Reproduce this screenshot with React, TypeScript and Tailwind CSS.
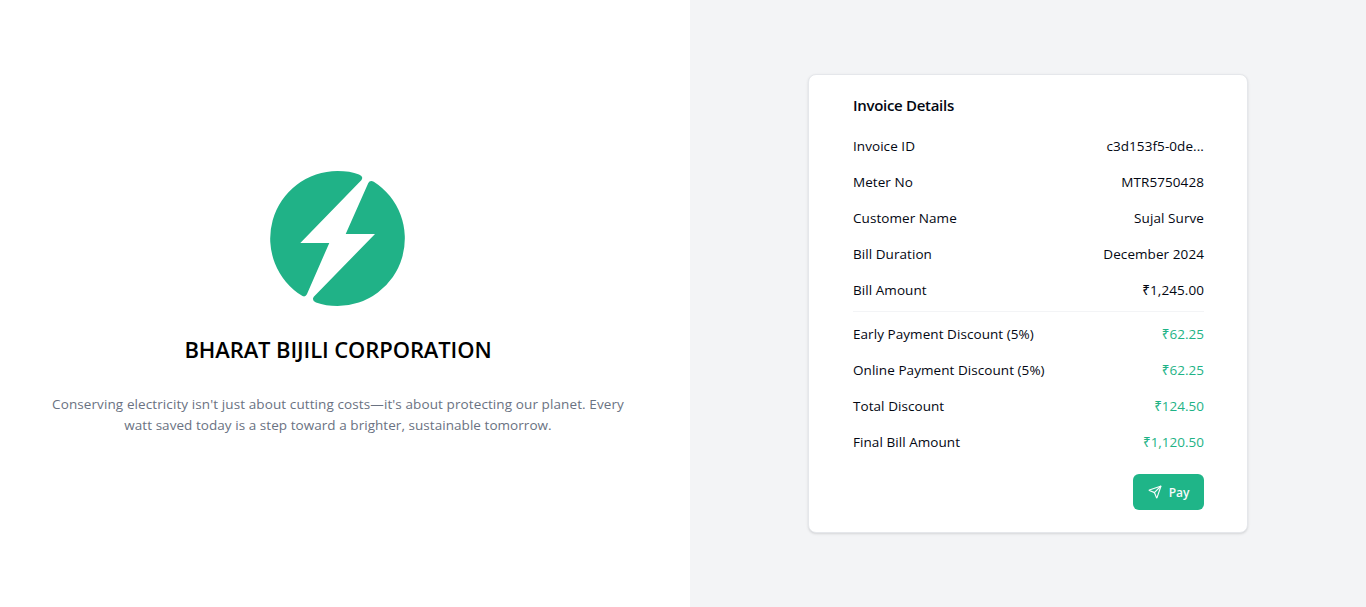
import { Send } from "lucide-react";

type Row = { label: string; value: string };

const details: Row[] = [
  { label: "Invoice ID", value: "c3d153f5-0de..." },
  { label: "Meter No", value: "MTR5750428" },
  { label: "Customer Name", value: "Sujal Surve" },
  { label: "Bill Duration", value: "December 2024" },
  { label: "Bill Amount", value: "₹1,245.00" },
];

const discounts: Row[] = [
  { label: "Early Payment Discount (5%)", value: "₹62.25" },
  { label: "Online Payment Discount (5%)", value: "₹62.25" },
  { label: "Total Discount", value: "₹124.50" },
  { label: "Final Bill Amount", value: "₹1,120.50" },
];

function DetailRow({ row, accent }: { row: Row; accent?: boolean }) {
  return (
    <div className="flex h-9 items-center justify-between whitespace-nowrap">
      <span className="tracking-[0.06px]">{row.label}</span>
      <span className={accent ? "text-[#1eb386]" : "tracking-[0.08px]"}>{row.value}</span>
    </div>
  );
}

function Logo() {
  return (
    <svg className="mr-0.5" width="135" height="135" viewBox="0 0 135 135" fill="#20b287" aria-hidden="true">
      <path d="M30.3 71.9H59.3L36.9 123.3Q35.6 126.2 32.5 125.1A67.5 67.5 0 0 1 67.5 0Q80 0 89 3.4Q94 5.4 91.3 9.2Z" />
      <path d="M105 63H75.7L98.3 12Q99.8 9 103.8 10.7A67.5 67.5 0 0 1 67.5 135Q56 135 46 131.5Q41.3 129.5 43.8 125.7Z" />
    </svg>
  );
}

export default function App() {
  return (
    <div className="flex h-[607px] w-full bg-white font-['Open_Sans','Noto_Sans',sans-serif] text-black">
      <section className="flex w-[690px] shrink-0 flex-col items-center pt-[171px] pr-3.5">
        <Logo />
        <h1 className="mt-[27px] text-[22px] leading-8 font-semibold tracking-[-0.1px] whitespace-nowrap">
          BHARAT BIJILI CORPORATION
        </h1>
        <p className="mt-[29px] text-center text-[13.5px] leading-[21px] tracking-[0.1px] whitespace-nowrap text-gray-500">
          Conserving electricity isn't just about cutting costs—it's about protecting our planet. Every
          <br />
          <span className="tracking-[0.05px]">
            watt saved today is a step toward a brighter, sustainable tomorrow.
          </span>
        </p>
      </section>
      <main className="flex flex-1 items-start justify-center bg-gray-100 pt-[74px]">
        <div className="h-[459px] w-[440px] rounded-lg border border-gray-200 bg-white pt-[18px] pr-[43px] pl-11 text-[13.5px] text-gray-950 shadow-sm">
          <h2 className="mb-[11px] text-[15px] leading-6 font-semibold tracking-[-0.3px]">Invoice Details</h2>
          {details.map((row) => (
            <DetailRow key={row.label} row={row} />
          ))}
          <div className="mt-[3px] mb-1 h-px bg-gray-100" />
          {discounts.map((row) => (
            <DetailRow key={row.label} row={row} accent />
          ))}
          <div className="mt-3.5 flex justify-end">
            <button className="flex h-9 w-[71px] items-center justify-center gap-[7px] rounded-md bg-[#1fb588] pt-px text-xs font-semibold tracking-[-0.1px] text-gray-50">
              <Send size={14} className="mb-px" />
              Pay
            </button>
          </div>
        </div>
      </main>
    </div>
  );
}
